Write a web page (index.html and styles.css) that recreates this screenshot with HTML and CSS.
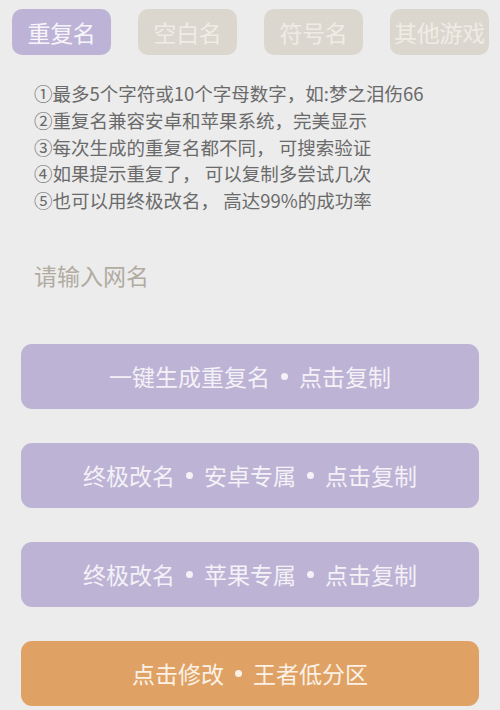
FILE: index.html
```html
<!DOCTYPE html>
<html lang="zh-CN">
<head>
<meta charset="utf-8">
<title>重复名</title>
<link rel="stylesheet" href="styles.css">
</head>
<body>
<div class="page">
  <nav class="tabs">
    <div class="tab active">重复名</div>
    <div class="tab">空白名</div>
    <div class="tab">符号名</div>
    <div class="tab">其他游戏</div>
  </nav>
  <ul class="tips">
    <li>①最多5个字符或10个字母数字，如:梦之泪伤66</li>
    <li>②重复名兼容安卓和苹果系统，完美显示</li>
    <li>③每次生成的重复名都不同， 可搜索验证</li>
    <li>④如果提示重复了， 可以复制多尝试几次</li>
    <li>⑤也可以用终极改名， 高达99%的成功率</li>
  </ul>
  <input class="name-input" type="text" placeholder="请输入网名">
  <div class="actions">
    <button class="btn purple">一键生成重复名<span class="dot"></span>点击复制</button>
    <button class="btn purple">终极改名<span class="dot"></span>安卓专属<span class="dot"></span>点击复制</button>
    <button class="btn purple">终极改名<span class="dot"></span>苹果专属<span class="dot"></span>点击复制</button>
    <button class="btn orange">点击修改<span class="dot"></span>王者低分区</button>
  </div>
</div>
</body>
</html>
```
FILE: styles.css
```css
html, body {
  margin: 0;
  padding: 0;
  background: #ececec;
}
.page {
  width: 500px;
  height: 710px;
  overflow: hidden;
  font-family: "Noto Sans CJK SC", "Noto Sans", sans-serif;
}
.tabs {
  display: flex;
  gap: 27px;
  padding: 9px 0 0 12px;
}
.tab {
  width: 99px;
  height: 46px;
  border-radius: 10px;
  background: #dcd7ce;
  color: #efece6;
  font-size: 23px;
  line-height: 46px;
  text-align: center;
  white-space: nowrap;
  letter-spacing: -0.3px;
}
.tab.active {
  background: #bdb3d6;
  color: #f7f5fa;
}
.tips {
  list-style: none;
  margin: 25px 0 0 0;
  padding: 0 0 0 34px;
  color: #6a6a6a;
  font-size: 18.5px;
  line-height: 26.75px;
}
.tips li {
  white-space: nowrap;
}
.name-input {
  display: block;
  box-sizing: border-box;
  margin: 41px 0 0 34px;
  padding: 0;
  width: 430px;
  height: 40px;
  border: none;
  outline: none;
  background: transparent;
  font-family: "Noto Sans CJK SC", "Noto Sans", sans-serif;
  font-size: 23px;
  color: #666;
}
.name-input::placeholder {
  color: #b1aba2;
}
.actions {
  display: flex;
  flex-direction: column;
  gap: 34px;
  margin: 49px 21px 0 21px;
}
.btn {
  height: 65px;
  border: none;
  border-radius: 11px;
  font-family: "Noto Sans CJK SC", "Noto Sans", sans-serif;
  font-size: 23px;
  color: #f4f1f7;
  display: flex;
  align-items: center;
  justify-content: center;
  padding: 0;
}
.btn.purple {
  background: #bdb3d5;
}
.btn.orange {
  background: #dfa264;
  color: #fbf1e6;
}
.dot {
  display: inline-block;
  width: 7px;
  height: 7px;
  border-radius: 50%;
  background: currentColor;
  margin: 0 11px;
}
```
